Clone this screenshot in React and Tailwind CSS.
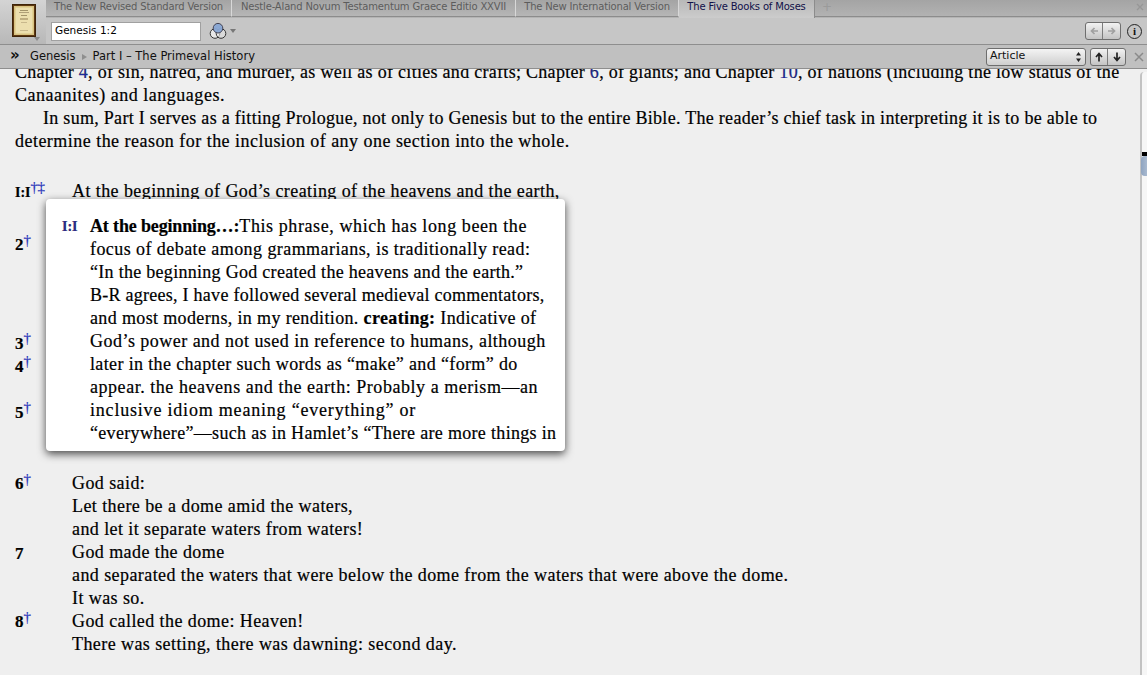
import React from "react";

const ui = { fontFamily: '"DejaVu Sans", sans-serif' };

function Tab({ children, active, w }) {
  return (
    <div
      className={
        active
          ? "h-[18px] pb-[6px] flex items-center justify-center text-[10px] tracking-[-0.17px] text-[#101048] bg-gradient-to-b from-[#b8b8b8] to-[#cccccc] border-r border-[#8c8c8c]"
          : "h-[17px] pb-[3px] flex items-center justify-center text-[10px] tracking-[-0.17px] text-[#5c5c5c] bg-gradient-to-b from-[#a4a4a4] to-[#b6b6b6] border-r border-[#d8d8d8] border-b border-b-[#8c8c8c]"
      }
      style={{ width: w }}
    >
      {children}
    </div>
  );
}

function Logo() {
  return (
    <svg width="24" height="33" viewBox="0 0 24 33">
      <rect x="0.5" y="0.5" width="23" height="32" fill="#5e3812" stroke="#3e2408" />
      <rect x="2" y="2" width="20" height="29" fill="#d8c280" />
      <rect x="3.5" y="3.5" width="17" height="26" fill="#ecdfae" />
      <rect x="8" y="6" width="8" height="1" fill="#a3946a" />
      <rect x="7" y="8" width="10" height="1" fill="#b0a078" />
      <rect x="9" y="11" width="6" height="1" fill="#a3946a" />
      <rect x="8" y="14" width="8" height="2" fill="#bfae80" />
      <rect x="9" y="18" width="6" height="1" fill="#c8b88c" />
      <rect x="8" y="26" width="8" height="1" fill="#c8b88c" />
    </svg>
  );
}

function Venn() {
  return (
    <svg width="18" height="18" viewBox="0 0 18 18" fill="none">
      <circle cx="6" cy="11.5" r="4.8" fill="#e8e8e8" stroke="#333" strokeWidth="1" />
      <circle cx="12" cy="11.5" r="4.8" fill="#e8e8e8" fillOpacity="0.6" stroke="#333" strokeWidth="1" />
      <circle cx="9" cy="6.2" r="4.8" fill="#88a6d4" fillOpacity="0.95" stroke="#445" strokeWidth="1" />
    </svg>
  );
}

function Arrow({ dir, color }) {
  const d = {
    left: "M10 6H4M6.5 3L3.5 6L6.5 9",
    right: "M2 6H8M5.5 3L8.5 6L5.5 9",
    up: "M6 10.5V4M3 6L6 2.5L9 6",
    down: "M6 1.5V8M3 6L6 9.5L9 6",
  }[dir];
  return (
    <svg width="12" height="12" viewBox="0 0 12 12" fill="none">
      <path d={d} stroke={color} strokeWidth="1.7" />
    </svg>
  );
}

function BtnPair({ a, b, color }) {
  return (
    <div className="flex h-[18px] rounded-[3px] border border-[#6e6e6e] bg-gradient-to-b from-[#f2f2f2] to-[#c4c4c4] overflow-hidden">
      <div className="w-[17px] flex items-center justify-center border-r border-[#7c7c7c]">
        <Arrow dir={a} color={color} />
      </div>
      <div className="w-[17px] flex items-center justify-center">
        <Arrow dir={b} color={color} />
      </div>
    </div>
  );
}

function Blue({ children }) {
  return <span className="text-[#1c2a9c]">{children}</span>;
}

function Verse({ n, marks = "†", lines, className = "", drop = false }) {
  return (
    <div className={"flex tracking-[0.42px] " + className}>
      <div className="w-[57px] shrink-0 font-bold text-black whitespace-nowrap tracking-normal">
        <span className={drop ? "inline-block translate-y-[1px] text-[17px]" : "text-[17px]"}>{n}</span>
        {marks && (
          <span className="inline-block align-top -translate-y-[4px] text-[#1f30b8] text-[15px] font-normal leading-[23px] tracking-[-0.5px] [-webkit-text-stroke:0.2px_#1f30b8]">
            {marks}
          </span>
        )}
      </div>
      <div>
        {lines.map((l, i) => (
          <div key={i} className="whitespace-nowrap">
            {l}
          </div>
        ))}
      </div>
    </div>
  );
}

export default function App() {
  return (
    <div className="w-[1147px] h-[675px] flex flex-col overflow-hidden bg-[#efefef] relative">
      <div className="flex h-[45px] shrink-0 border-b border-[#8e8e8e]" style={ui}>
        <div className="w-[46px] shrink-0 bg-gradient-to-b from-[#d4d4d4] to-[#b8b8b8] pt-[4px] pl-[12px] relative">
          <Logo />
          <div className="absolute right-[6px] bottom-[3px] w-0 h-0 border-x-[3px] border-x-transparent border-t-[4px] border-t-[#8a8a8a]" />
        </div>
        <div className="flex-1 flex flex-col min-w-0">
          <div className="flex h-[18px] shrink-0 bg-gradient-to-b from-[#a4a4a4] to-[#b4b4b4]">
            <Tab w={186}>The New Revised Standard Version</Tab>
            <Tab w={284}>Nestle-Aland Novum Testamentum Graece Editio XXVII</Tab>
            <Tab w={163}>The New International Version</Tab>
            <Tab w={136} active>The Five Books of Moses</Tab>
            <div className="w-[24px] h-[17px] pb-[3px] flex items-center justify-center text-[12px] text-[#9a9a9a] border-b border-[#8c8c8c]">+</div>
            <div className="flex-1 h-[17px] border-b border-[#8c8c8c]" />
            <div className="w-[16px] h-[17px] pb-[3px] pr-[3px] border-b border-[#8c8c8c] flex items-center justify-end text-[#979797]">
              <svg width="8" height="8" viewBox="0 0 8 8"><path d="M1 1L7 7M7 1L1 7" stroke="currentColor" strokeWidth="1.4" /></svg>
            </div>
          </div>
          <div className="flex-1 bg-[#c6c6c6] flex items-center pl-[5px] pr-[5px]">
            <div className="w-[150px] h-[19px] bg-white border border-[#a0a0a0] text-[10.5px] text-black flex items-center pl-[3px]">
              Genesis 1:2
            </div>
            <div className="ml-[8px]"><Venn /></div>
            <div className="ml-[3px] w-0 h-0 border-x-[3px] border-x-transparent border-t-[4px] border-t-[#777]" />
            <div className="ml-auto flex items-center">
              <BtnPair a="left" b="right" color="#a0a0a0" />
              <div className="ml-[6px] w-[15px] h-[15px] rounded-full border border-[#222] flex items-center justify-center text-[11px] font-bold text-[#111]" style={{ fontFamily: '"Liberation Serif", serif' }}>
                i
              </div>
            </div>
          </div>
        </div>
      </div>

      <div className="h-[24px] shrink-0 bg-[#c0c0c0] border-b border-[#8e8e8e] flex items-center pl-[10px] pr-[3px] text-[11.5px] text-[#111]" style={ui}>
        <span className="text-[15px] font-bold leading-none -mt-[3px] w-[20px]">»</span>
        <span>Genesis</span>
        <span className="mx-[6px] w-0 h-0 border-y-[3px] border-y-transparent border-l-[5px] border-l-[#8e8e8e]" />
        <span>Part I – The Primeval History</span>
        <div className="ml-auto flex items-center">
          <div className="w-[100px] h-[18px] rounded-[3px] border border-[#6e6e6e] bg-gradient-to-b from-[#f4f4f4] to-[#cfcfcf] flex items-center pl-[3px] relative text-[11px]">
            Article
            <svg className="absolute right-[3px] top-[2px]" width="7" height="12" viewBox="0 0 7 12"><path d="M3.5 1L6 4.5H1ZM3.5 11L1 7.5H6Z" fill="#222" /></svg>
          </div>
          <div className="ml-[4px]"><BtnPair a="up" b="down" color="#222" /></div>
          <div className="ml-[8px] text-[#8a8a8a] w-[10px] flex items-center">
            <svg width="10" height="10" viewBox="0 0 10 10"><path d="M1 1L9 9M9 1L1 9" stroke="currentColor" strokeWidth="1.5" /></svg>
          </div>
        </div>
      </div>

      <div className="flex-1 relative overflow-hidden text-[18px] leading-[23px] text-black tracking-[0.29px] [-webkit-text-stroke:0.2px_#000]" style={{ fontFamily: '"Liberation Serif", serif' }}>
        <div className="pl-[15px] -mt-[8px]">
          <div className="whitespace-nowrap">
            Chapter <Blue>4</Blue>, of sin, hatred, and murder, as well as of cities and crafts; Chapter <Blue>6</Blue>, of giants; and Chapter <Blue>10</Blue>, of nations (including the low status of the
          </div>
          <div className="tracking-[0.52px]">Canaanites) and languages.</div>
          <div className="pl-[28px] whitespace-nowrap">
            In sum, Part I serves as a fitting Prologue, not only to Genesis but to the entire Bible. The reader’s chief task in interpreting it is to be able to
          </div>
          <div className="tracking-[0.47px]">determine the reason for the inclusion of any one section into the whole.</div>

          <Verse className="mt-[27px]" n={<span className="text-[14px]">I:I</span>} marks="†‡" lines={["At the beginning of God’s creating of the heavens and the earth,"]} />
          <Verse className="mt-[29px]" n="2" lines={["when the earth was wild and waste,", "darkness over the face of Ocean,", "rushing-spirit of God hovering over the face of the waters—"]} />
          <Verse className="mt-[29px]" n="3" drop lines={["God said: Let there be light! And there was light."]} />
          <Verse n="4" drop lines={["God saw the light: that it was good.", "God separated the light from the darkness."]} />
          <Verse n="5" drop lines={["God called the light: Day! and the darkness he called: Night!", "There was setting, there was dawning: one day."]} />
          <Verse className="mt-[26px]" n="6" lines={["God said:", "Let there be a dome amid the waters,", "and let it separate waters from waters!"]} />
          <Verse n="7" drop marks="" lines={["God made the dome", "and separated the waters that were below the dome from the waters that were above the dome.", "It was so."]} />
          <Verse n="8" lines={["God called the dome: Heaven!", "There was setting, there was dawning: second day."]} />
        </div>

        <div className="absolute left-[46px] top-[130px] w-[519px] h-[252px] bg-white rounded-[4px] shadow-[0_3px_8px_rgba(0,0,0,0.7)] overflow-hidden pt-[16px] flex">
          <div className="w-[44px] shrink-0 pl-[16px] font-bold text-[14px] text-[#2c2a8c] tracking-normal">I:I</div>
          <div className="whitespace-nowrap">
            <div className="tracking-[0.59px]"><b className="tracking-[-0.15px]">At the beginning…:</b>This phrase, which has long been the</div>
            <div className="tracking-[0.43px]">focus of debate among grammarians, is traditionally read:</div>
            <div>“In the beginning God created the heavens and the earth.”</div>
            <div className="tracking-[0.26px]">B-R agrees, I have followed several medieval commentators,</div>
            <div className="tracking-[0.36px]">and most moderns, in my rendition. <b>creating:</b> Indicative of</div>
            <div className="tracking-[0.47px]">God’s power and not used in reference to humans, although</div>
            <div className="tracking-[0.36px]">later in the chapter such words as “make” and “form” do</div>
            <div className="tracking-[0.54px]">appear. the heavens and the earth: Probably a merism—an</div>
            <div className="tracking-[0.8px]">inclusive idiom meaning “everything” or</div>
            <div className="tracking-[0.32px]">“everywhere”—such as in Hamlet’s “There are more things in</div>
          </div>
        </div>

        <div className="absolute right-0 top-[3px] bottom-0 w-[7px] bg-[#f6f6f6] border-l-2 border-[#c2c2c2] rounded-tl-[4px]">
          <div className="absolute left-0 right-0 top-[80px] h-[4px] bg-black" />
          <div className="absolute -left-[1px] right-0 top-[84px] h-[20px] rounded-l-[4px] bg-gradient-to-r from-[#8fa4c0] to-[#a9bad0]" />
        </div>
      </div>
    </div>
  );
}
